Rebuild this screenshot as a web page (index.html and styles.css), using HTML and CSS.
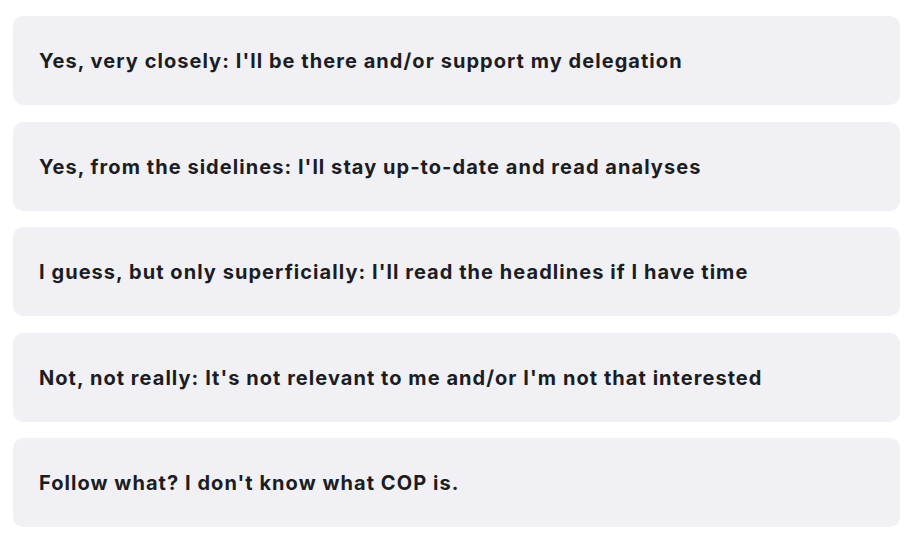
FILE: index.html
```html
<!DOCTYPE html>
<html lang="en">
<head>
<meta charset="utf-8">
<link rel="stylesheet" href="styles.css">
<title>Poll</title>
</head>
<body>
<ul class="options">
  <li class="option">Yes, very closely: I'll be there and/or support my delegation</li>
  <li class="option">Yes, from the sidelines: I'll stay up-to-date and read analyses</li>
  <li class="option">I guess, but only superficially: I'll read the headlines if I have time</li>
  <li class="option">Not, not really: It's not relevant to me and/or I'm not that interested</li>
  <li class="option">Follow what? I don't know what COP is.</li>
</ul>
</body>
</html>
```
FILE: styles.css
```css
html, body {
  margin: 0;
  padding: 0;
  background: #ffffff;
}

.options {
  list-style: none;
  margin: 0;
  padding: 16px 12px 0 13px;
  display: flex;
  flex-direction: column;
  gap: 16.5px;
}

.option {
  height: 89px;
  box-sizing: border-box;
  display: flex;
  align-items: center;
  padding: 1px 26px 0;
  background: #f1f0f5;
  border-radius: 10px;
  font-family: Inter, "Noto Sans", sans-serif;
  font-weight: 700;
  font-size: 20px;
  color: #1b1d23;
  letter-spacing: 1.05px;
}
```
